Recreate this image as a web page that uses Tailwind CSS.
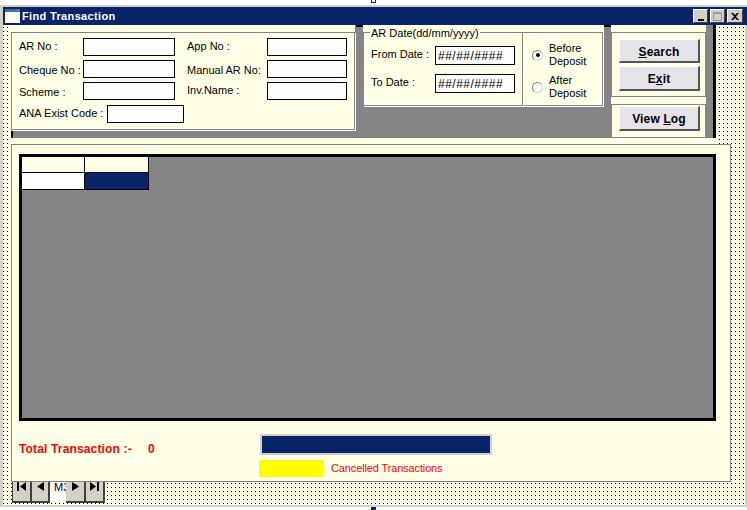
<!DOCTYPE html>
<html lang="en">
 <head>
  <meta charset="utf-8"/>
  <title>Find Transaction</title>
  <script src="https://cdn.jsdelivr.net/npm/@tailwindcss/browser@4"></script>
 </head>
 <body class="w-[747px] h-[510px] overflow-hidden bg-white font-['Liberation_Sans',sans-serif] text-[11px] text-black">
  <div class="relative h-[510px] pt-[5px]">
   <!-- selection handles -->
   <div class="absolute left-[371px] top-0 w-[5px] h-[3px] border border-t-0 border-[#0a246a]"></div>
   <div class="absolute left-[371px] bottom-0 w-[5px] h-[3px] bg-[#0a246a]"></div>

   <div class="h-[502px] border-t-2 border-b-2 border-l-[3px] border-[#d4d0c8]">
    <!-- title bar -->
    <div class="h-[18px] bg-[#0a246a] flex items-center pl-[2px] pr-[4px]">
     <svg class="w-[15px] h-[14px] mr-[2px]" viewBox="0 0 15 14">
      <rect width="15" height="14" fill="#fff"/>
      <rect width="15" height="3" fill="#3a6ea5"/>
      <rect x="12" y="1" width="2" height="1" fill="#f08030"/>
     </svg>
     <span class="font-bold text-white tracking-[0.35px]">Find Transaction</span>
     <div class="ml-auto flex gap-[2px]">
      <div class="w-[15px] h-[14px] bg-[#d4d0c8] border border-t-white border-l-white border-r-[#404040] border-b-[#404040] flex items-end justify-center pb-[1px]"><div class="w-[6px] h-[2px] bg-black"></div></div>
      <div class="w-[15px] h-[14px] bg-[#d4d0c8] border border-t-white border-l-white border-r-[#404040] border-b-[#404040] flex items-center justify-center"><div class="w-[9px] h-[9px] border border-t-2 border-[#9a9a9a]"></div></div>
      <div class="w-[16px] h-[14px] bg-[#d4d0c8] border border-t-white border-l-white border-r-[#404040] border-b-[#404040] flex items-center justify-center">
       <svg class="w-[8px] h-[7px]" viewBox="0 0 8 7"><path d="M0 0h2l2 2 2-2h2L5 3.500 8 7H6L4 5 2 7H0l3-3.500z" fill="#000"/></svg>
      </div>
     </div>
    </div>

    <!-- form surface -->
    <div class="h-[480px] pl-[8px] border-r-2 border-[#d4d0c8] bg-black bg-[linear-gradient(90deg,transparent_1px,#ffffe8_1px),linear-gradient(transparent_1px,#ffffe8_1px)] bg-[length:4px_4px] bg-[position:0_2px]">
     <!-- toolbar strip -->
     <div class="w-[705px] h-[113px] bg-[#868487] border-r-[3px] border-black flex items-start relative">
      <div class="absolute left-0 bottom-0 w-[2px] h-[7px] bg-black"></div>
      <div class="absolute left-[345px] top-0 w-[7px] h-[2px] bg-black"></div>
      <div class="absolute left-[593px] top-0 w-[7px] h-[2px] bg-black"></div>

      <!-- search fields -->
      <div class="w-[344px] shrink-0 bg-[#ffffe8] pt-[7px]">
       <div class="h-[98px] border border-[#868487] shadow-[1px_1px_0_#fff] pl-[7px] pt-[5px] grid grid-cols-[64px_92px_12px_80px_80px] grid-rows-[18px_18px_18px_18px] gap-y-[4px] content-start">
        <span class="self-center pb-[2px]">AR No :</span>
        <div class="h-[18px] bg-white border border-black"></div>
        <span></span>
        <span class="self-center pb-[2px]">App No :</span>
        <div class="h-[18px] bg-white border border-black"></div>
        <span class="self-center pt-[2px]">Cheque No :</span>
        <div class="h-[18px] bg-white border border-black"></div>
        <span></span>
        <span class="self-center pt-[2px] whitespace-nowrap">Manual AR No:</span>
        <div class="h-[18px] bg-white border border-black"></div>
        <span class="self-center pt-[2px]">Scheme :</span>
        <div class="h-[18px] bg-white border border-black"></div>
        <span></span>
        <span class="self-start">Inv.Name :</span>
        <div class="h-[18px] bg-white border border-black"></div>
        <div class="col-span-5 flex items-center mt-[2px]">
         <span class="w-[88px] pb-[2px] whitespace-nowrap">ANA Exist Code :</span>
         <div class="w-[77px] h-[18px] bg-white border border-black"></div>
        </div>
       </div>
      </div>

      <div class="ml-[8px] w-[241px] shrink-0 bg-[#ffffe8] pt-[7px] flex">
       <!-- date range -->
       <div class="relative w-[160px] h-[74px] border border-[#868487] shadow-[1px_1px_0_#fff] shrink-0 pl-[7px]">
        <span class="absolute left-[6px] -top-[7px] bg-[#ffffe8] px-[1px] leading-[14px] whitespace-nowrap">AR Date(dd/mm/yyyy)</span>
        <div class="flex items-center mt-[13px]">
         <span class="w-[64px] pb-[2px]">From Date :</span>
         <div class="w-[80px] h-[19px] bg-white border border-black flex items-center pl-[2px] text-[12px] tracking-[0.5px]">##/##/####</div>
        </div>
        <div class="flex items-center mt-[9px]">
         <span class="w-[64px] pb-[3px]">To Date :</span>
         <div class="w-[80px] h-[19px] bg-white border border-black flex items-center pl-[2px] text-[12px] tracking-[0.5px]">##/##/####</div>
        </div>
       </div>

       <!-- deposit option -->
       <div class="w-[80px] h-[74px] border border-[#868487] shadow-[1px_1px_0_#fff] shrink-0 pl-[8px] pt-[9px] flex flex-col gap-[6px]">
        <div class="flex items-center gap-[6px] leading-[13px]">
         <div class="w-[11px] h-[11px] rounded-full bg-white border border-t-[#808080] border-l-[#808080] border-r-[#d4d0c8] border-b-[#d4d0c8] flex items-center justify-center"><div class="w-[4px] h-[4px] rounded-full bg-black"></div></div>
         <span>Before<br/>Deposit</span>
        </div>
        <div class="flex items-center gap-[6px] leading-[13px]">
         <div class="w-[11px] h-[11px] rounded-full bg-white border border-t-[#808080] border-l-[#808080] border-r-[#d4d0c8] border-b-[#d4d0c8]"></div>
         <span>After<br/>Deposit</span>
        </div>
       </div>
      </div>

      <!-- actions -->
      <div class="ml-[7px] w-[95px] h-[113px] shrink-0 bg-[#ffffe8] pt-[7px] flex flex-col gap-[7px]">
       <div class="h-[65px] border border-[#868487] flex flex-col items-start pl-[7px] pt-[6px] gap-[3px]">
        <button class="w-[81px] h-[24px] pt-[2px] bg-[#e6e3e8] border-t border-l border-t-white border-l-white border-b-2 border-r-2 border-b-[#555] border-r-[#555] font-bold text-[12px] tracking-[0.15px]"><u>S</u>earch</button>
        <button class="w-[81px] h-[25px] pt-[2px] bg-[#e6e3e8] border-t border-l border-t-white border-l-white border-b-2 border-r-2 border-b-[#555] border-r-[#555] font-bold text-[12px] tracking-[0.15px]">E<u>x</u>it</button>
       </div>
       <div class="h-[34px] border border-[#868487] flex items-start pl-[7px] pt-[1px]">
        <button class="w-[81px] h-[25px] pt-[2px] bg-[#e6e3e8] border-t border-l border-t-white border-l-white border-b-2 border-r-2 border-b-[#555] border-r-[#555] font-bold text-[12px] tracking-[0.15px]">View <u>L</u>og</button>
       </div>
      </div>
     </div>
     <div class="h-[6px] w-[705px] bg-[#ffffe8]"></div>

     <!-- results panel -->
     <div class="w-[720px] h-[338px] bg-[#ffffe8] border border-[#868487] pl-[7px] pt-[9px]">
      <div class="w-[697px] h-[267px] bg-[#868487] border-[3px] border-black">
       <div class="grid grid-cols-[64px_64px] grid-rows-[17px_17px] w-[128px] -mt-[1px] -ml-[1px]">
        <div class="bg-[#ffffe8] border-t border-l border-b border-r border-black"></div>
        <div class="bg-[#ffffe8] border-t border-b border-r border-black"></div>
        <div class="bg-white border-l border-r border-b border-black"></div>
        <div class="bg-[#0a246a] border-r border-b border-black"></div>
       </div>
      </div>
      <div class="flex mt-[13px]">
       <div class="w-[240px] pt-[6px] text-[12px] font-bold text-[#ff0000] tracking-[0.15px] flex">
        <span class="w-[129px]">Total Transaction :-</span><span>0</span>
       </div>
       <div>
        <div class="w-[232px] h-[21px] bg-[#0a246a] border-2 border-[#d4d0c8] ml-[1px]"></div>
        <div class="flex items-center mt-[5px]">
         <div class="w-[65px] h-[17px] bg-[#ffff00]"></div>
         <span class="ml-[7px] text-[#ff0000] tracking-[-0.13px]">Cancelled Transactions</span>
        </div>
       </div>
      </div>
     </div>

     <!-- record navigator -->
     <div class="flex h-[21px] ml-[1px]">
      <div class="w-[20px] h-[21px] bg-[#d4d0c8] border-l border-l-[#404040] border-r-2 border-b-2 border-r-[#404040] border-b-[#404040] flex justify-center">
       <svg class="w-[10px] h-[9px]" viewBox="0 0 10 9"><path d="M0 0h2v9H0zM9 0v9L3 4.500z" fill="#000"/></svg>
      </div>
      <div class="w-[18px] h-[21px] bg-[#d4d0c8] border-r-2 border-b-2 border-[#404040] flex justify-center">
       <svg class="w-[7px] h-[9px]" viewBox="0 0 7 9"><path d="M7 0v9L0 4.500z" fill="#000"/></svg>
      </div>
      <div class="w-[16px] h-[21px] bg-white overflow-hidden pl-[4px] leading-[11px] whitespace-nowrap">M3</div>
      <div class="w-[20px] h-[21px] bg-[#d4d0c8] border-r-2 border-b-2 border-[#404040] flex justify-center">
       <svg class="w-[7px] h-[9px]" viewBox="0 0 7 9"><path d="M0 0v9l7-4.500z" fill="#000"/></svg>
      </div>
      <div class="w-[19px] h-[21px] bg-[#d4d0c8] border-r-2 border-b-2 border-[#404040] flex justify-center">
       <svg class="w-[10px] h-[9px]" viewBox="0 0 10 9"><path d="M0 0v9l6-4.500zM7 0h2v9H7z" fill="#000"/></svg>
      </div>
     </div>
    </div>
   </div>
  </div>
 </body>
</html>
